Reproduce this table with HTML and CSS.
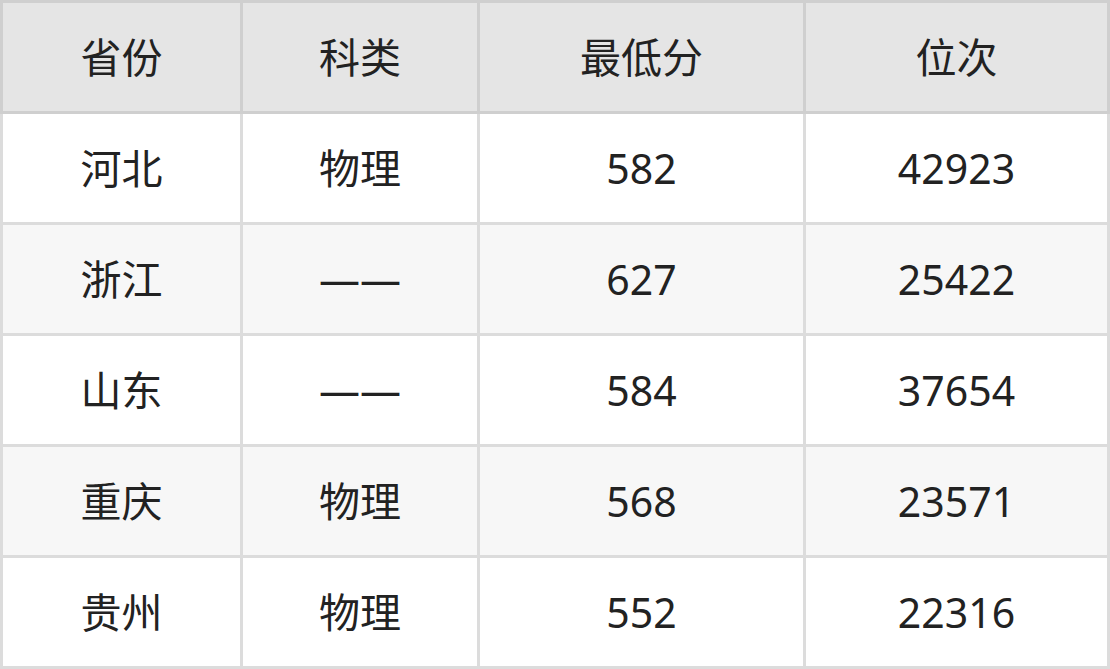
FILE: index.html
```html
<!DOCTYPE html>
<html lang="zh-CN">
<head>
<meta charset="utf-8">
<link rel="stylesheet" href="styles.css">
</head>
<body>
<table class="score-table">
  <colgroup>
    <col class="c1"><col class="c2"><col class="c3"><col class="c4">
  </colgroup>
  <thead>
    <tr><th>省份</th><th>科类</th><th>最低分</th><th>位次</th></tr>
  </thead>
  <tbody>
    <tr><td>河北</td><td>物理</td><td>582</td><td>42923</td></tr>
    <tr class="alt"><td>浙江</td><td>——</td><td>627</td><td>25422</td></tr>
    <tr><td>山东</td><td>——</td><td>584</td><td>37654</td></tr>
    <tr class="alt"><td>重庆</td><td>物理</td><td>568</td><td>23571</td></tr>
    <tr><td>贵州</td><td>物理</td><td>552</td><td>22316</td></tr>
  </tbody>
</table>
</body>
</html>
```
FILE: styles.css
```css
html, body {
  margin: 0;
  padding: 0;
  background: #ffffff;
}
.score-table {
  width: 1110px;
  table-layout: fixed;
  border-collapse: collapse;
  font-family: "Noto Sans", "Noto Sans CJK SC", sans-serif;
  font-size: 41px;
  color: #222222;
}
.c1 { width: 240px; }
.c2 { width: 237px; }
.c3 { width: 326px; }
.c4 { width: 304px; }
.score-table tr { height: 111px; }
.score-table th,
.score-table td {
  padding: 0;
  text-align: center;
  vertical-align: middle;
  font-weight: 400;
  line-height: 1;
}
.score-table th {
  background: #e5e5e5;
  border: 3px solid #cfcfcf;
}
.score-table td {
  border: 3px solid #dcdcdc;
}
.score-table tr.alt td {
  background: #f7f7f7;
}
```
